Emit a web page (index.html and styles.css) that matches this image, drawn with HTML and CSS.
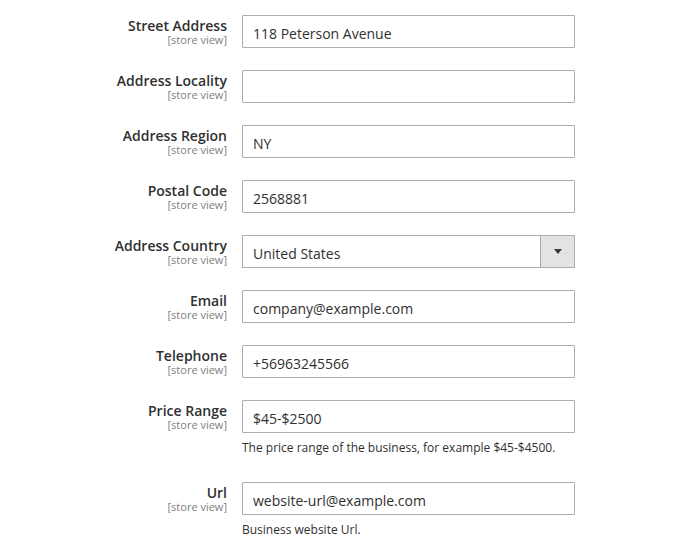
FILE: index.html
```html
<!DOCTYPE html>
<html>
<head>
<meta charset="utf-8">
<link rel="stylesheet" href="styles.css">
</head>
<body>
<form class="form">
  <div class="field">
    <label class="label"><span class="name">Street Address</span><span class="scope">[store view]</span></label>
    <div class="control"><input class="input" type="text" value="118 Peterson Avenue"></div>
  </div>
  <div class="field">
    <label class="label"><span class="name">Address Locality</span><span class="scope">[store view]</span></label>
    <div class="control"><input class="input" type="text" value=""></div>
  </div>
  <div class="field">
    <label class="label"><span class="name">Address Region</span><span class="scope">[store view]</span></label>
    <div class="control"><input class="input" type="text" value="NY"></div>
  </div>
  <div class="field">
    <label class="label"><span class="name">Postal Code</span><span class="scope">[store view]</span></label>
    <div class="control"><input class="input" type="text" value="2568881"></div>
  </div>
  <div class="field">
    <label class="label"><span class="name">Address Country</span><span class="scope">[store view]</span></label>
    <div class="control">
      <div class="select">
        <span class="select-value">United States</span>
        <span class="select-arrow"><svg width="8" height="5" viewBox="0 0 8 5"><path d="M0 0H8L4 5Z" fill="#41362f"/></svg></span>
      </div>
    </div>
  </div>
  <div class="field">
    <label class="label"><span class="name">Email</span><span class="scope">[store view]</span></label>
    <div class="control"><input class="input" type="text" value="company@example.com"></div>
  </div>
  <div class="field">
    <label class="label"><span class="name">Telephone</span><span class="scope">[store view]</span></label>
    <div class="control"><input class="input" type="text" value="+56963245566"></div>
  </div>
  <div class="field">
    <label class="label"><span class="name">Price Range</span><span class="scope">[store view]</span></label>
    <div class="control">
      <input class="input" type="text" value="$45-$2500">
      <div class="note">The price range of the business, for example $45-$4500.</div>
    </div>
  </div>
  <div class="field">
    <label class="label"><span class="name">Url</span><span class="scope">[store view]</span></label>
    <div class="control">
      <input class="input" type="text" value="website-url@example.com">
      <div class="note">Business website Url.</div>
    </div>
  </div>
</form>
</body>
</html>
```

FILE: styles.css
```css
html, body {
  margin: 0;
  padding: 0;
  background: #ffffff;
}
body {
  font-family: "Open Sans", "Liberation Sans", sans-serif;
  color: #303030;
}
.form {
  padding-top: 15px;
  display: flex;
  flex-direction: column;
  gap: 22px;
}
.field {
  display: grid;
  grid-template-columns: 227px 333px;
  column-gap: 15px;
  align-items: start;
}
.label {
  display: flex;
  flex-direction: column;
  align-items: flex-end;
  text-align: right;
  padding-top: 2px;
}
.name {
  font-size: 14px;
  font-weight: 600;
  line-height: 17px;
  color: #303030;
}
.scope {
  font-size: 11px;
  line-height: 12px;
  color: #808080;
}
.control {
  display: flex;
  flex-direction: column;
}
.input {
  box-sizing: border-box;
  width: 333px;
  height: 33px;
  margin: 0;
  border: 1px solid #adadad;
  border-radius: 1px;
  padding: 3px 10px 0;
  font-family: "Open Sans", "Liberation Sans", sans-serif;
  font-size: 14px;
  color: #303030;
  background: #fff;
  outline: none;
}
.select {
  box-sizing: border-box;
  width: 333px;
  height: 33px;
  border: 1px solid #adadad;
  display: flex;
  align-items: stretch;
  background: #fff;
}
.select-value {
  flex: 1;
  display: flex;
  align-items: center;
  padding: 3px 0 0 10px;
  font-size: 14px;
  color: #303030;
}
.select-arrow {
  width: 33px;
  border-left: 1px solid #adadad;
  background: #e3e3e3;
  display: flex;
  align-items: center;
  justify-content: center;
}
.note {
  margin: 6px 0 3px;
  font-size: 12px;
  line-height: 18px;
  color: #303030;
}
```
